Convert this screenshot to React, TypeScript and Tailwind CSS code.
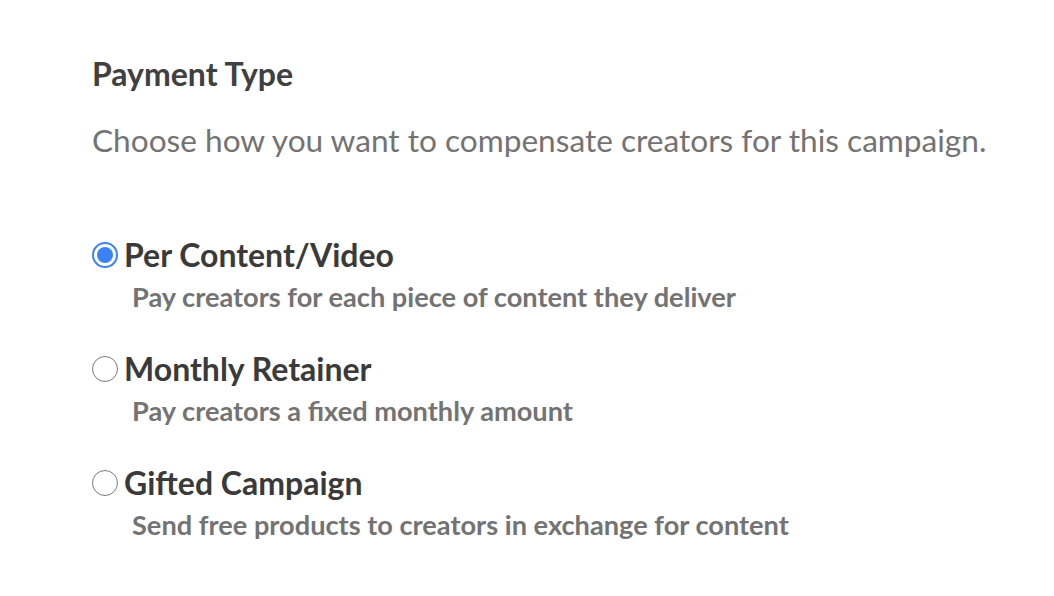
import React from "react";

type Option = { id: string; label: string; hint: string };

const OPTIONS: Option[] = [
  { id: "per-content", label: "Per Content/Video", hint: "Pay creators for each piece of content they deliver" },
  { id: "retainer", label: "Monthly Retainer", hint: "Pay creators a fixed monthly amount" },
  { id: "gifted", label: "Gifted Campaign", hint: "Send free products to creators in exchange for content" },
];

function Radio({ checked }: { checked: boolean }) {
  return checked ? (
    <span className="flex h-[26px] w-[26px] shrink-0 items-center justify-center rounded-full border-[2px] border-[#3b82f6] bg-white">
      <span className="h-[16px] w-[16px] rounded-full bg-[#3b82f6]" />
    </span>
  ) : (
    <span className="h-[26px] w-[26px] shrink-0 rounded-full border-[1.5px] border-[#7a7a7a] bg-white" />
  );
}

export default function App() {
  const selected = "per-content";
  return (
    <div className="min-h-[596px] w-[1054px] bg-white font-['Lato','Noto_Sans',sans-serif]">
      <div className="pl-[92px] pr-[40px] pt-[54px]">
        <h2 className="text-[32px] font-bold leading-[40px] text-[#404040]">Payment Type</h2>
        <p className="mt-[26px] whitespace-nowrap text-[31.6px] leading-[40px] text-[#737373]">
          Choose how you want to compensate creators for this campaign.
        </p>
        <div className="mt-[75px] flex flex-col gap-[35px]">
          {OPTIONS.map((o) => (
            <label key={o.id} className="flex flex-col">
              <span className="flex items-center gap-[6px]">
                <Radio checked={o.id === selected} />
                <span className="text-[32px] font-bold leading-[40px] text-[#3a3a3a]">{o.label}</span>
              </span>
              <span className="mt-[5px] pl-[40px] text-[27.2px] font-bold leading-[34px] text-[#737373]">
                {o.hint}
              </span>
            </label>
          ))}
        </div>
      </div>
    </div>
  );
}
